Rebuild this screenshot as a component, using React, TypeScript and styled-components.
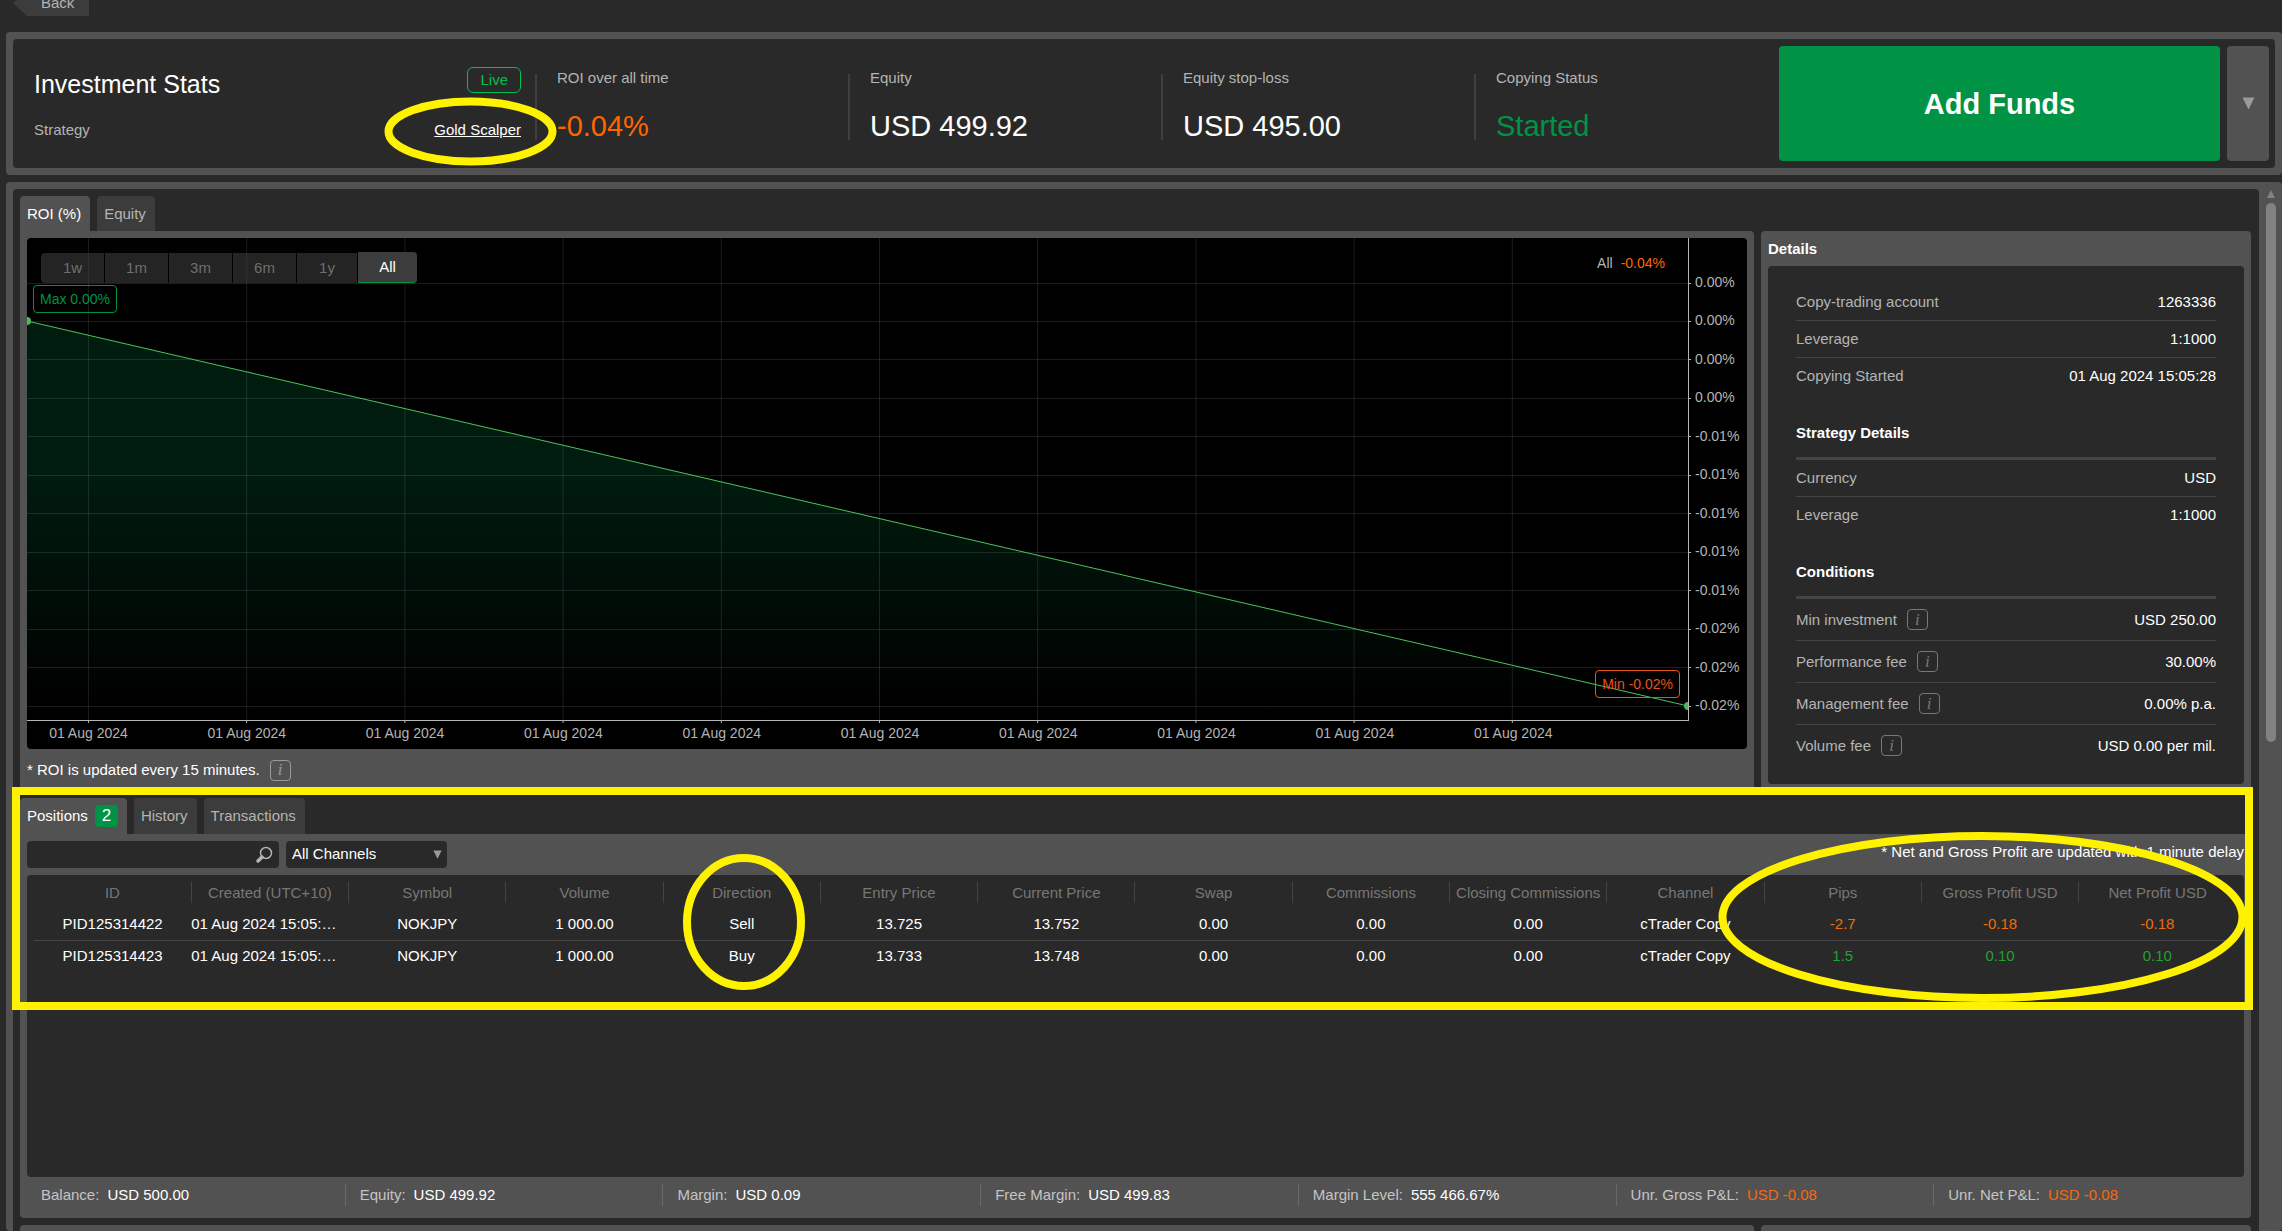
import React from "react";
import styled, { createGlobalStyle, css } from "styled-components";

const dark = "#292929";
const grey = "#525252";
const green = "#009345";
const orange = "#ff6600";

const Global = createGlobalStyle`
  *, *::before, *::after { box-sizing: border-box; }
  html, body { margin: 0; background: ${dark}; height: 100%; overflow: hidden; }
  #root { height: 100%; }
  body, button, input, select, table {
    font-family: "Liberation Sans", Arial, sans-serif;
    font-size: 15px;
    line-height: 18px;
  }
  button, input, select { border: 0; padding: 0; margin: 0; }
  h1, h2, h3, p, dl, dd { margin: 0; }
`;

const Page = styled.div`
  position: relative;
  height: 100%;
  overflow: hidden;
  display: flex;
  flex-direction: column;
  padding-left: 6px;
  color: #fff;
  background: ${dark};
`;

const TopBar = styled.div`
  height: 32px;
  flex: none;
  padding-left: 7px;
  display: flex;
  align-items: flex-start;
`;

const BackButton = styled.button`
  height: 16px;
  width: 76px;
  padding: 0 14px 4px 28px;
  display: flex;
  align-items: flex-end;
  line-height: 18px;
  color: #b4b4b4;
  background: #3c3c3c;
  clip-path: polygon(14px 100%, 0 3px, 3px 0, 100% 0, 100% 100%);
`;

const Frame = styled.section`
  background: ${grey};
  border-radius: 4px;
  padding: 7px;
`;

const Header = styled.div`
  background: ${dark};
  border-radius: 4px;
  height: 129px;
  padding: 7px 6px 7px 7px;
  display: flex;
  gap: 7px;
`;

const Summary = styled.div`
  flex: 1;
  display: grid;
  grid-template-columns: 515fr 313fr 313fr 313fr 305fr 441fr;
`;

const Intro = styled.div`
  padding: 20px 14px 0;
  display: flex;
  flex-direction: column;
  gap: 27px;
`;

const IntroLine = styled.div`
  display: flex;
  justify-content: space-between;
  align-items: center;
  color: #b4b4b4;
  height: 28px;

  & + & { height: 18px; }
`;

const Title = styled.h1`
  font-size: 25px;
  line-height: 36px;
  font-weight: 400;
  color: #fff;
  padding-top: 8px;
`;

const LiveBadge = styled.span`
  border: 1px solid #00c04f;
  color: #00c04f;
  border-radius: 6px;
  padding: 3px 12px;
  line-height: 18px;
`;

const StrategyLink = styled.a`
  color: #fff;
`;

const Stat = styled.div`
  margin: 28px 0 21px;
  padding-left: 20px;
  border-left: 2px solid #3f3f3f;
`;

const StatLabel = styled.div`
  color: #b4b4b4;
  line-height: 18px;
  margin-top: -5px;
`;

const StatValue = styled.div<{ $color?: string }>`
  font-size: 29px;
  line-height: 28px;
  margin-top: 25px;
  color: ${(p) => p.$color || "#fff"};
`;

const AddFunds = styled.button`
  background: ${green};
  color: #fff;
  border-radius: 4px;
  font-size: 29px;
  line-height: 34px;
  font-weight: 700;
`;

const MoreButton = styled.button`
  width: 42px;
  border-radius: 4px;
  background: ${grey};
  display: flex;
  align-items: center;
  justify-content: center;
`;

const Workspace = styled(Frame)`
  flex: 1;
  min-height: 0;
  margin-top: 7px;
  padding: 7px 6px 0 7px;
  display: flex;
  gap: 7px;
`;

const Scroller = styled.div`
  flex: 1;
  min-width: 0;
  background: ${dark};
  border-radius: 4px 4px 0 0;
  padding: 7px 8px 0 7px;
  overflow: hidden;
`;

const ScrollBar = styled.div`
  width: 10px;
  display: flex;
  flex-direction: column;
  align-items: center;
  gap: 5px;
`;

const ScrollThumb = styled.div`
  width: 10px;
  height: 539px;
  border-radius: 5px;
  background: #828282;
`;

const Tabs = styled.div`
  display: flex;
  gap: 7px;
`;

const Tab = styled.button<{ $active?: boolean; $tall?: boolean }>`
  height: ${(p) => (p.$tall ? 36 : 35)}px;
  padding: 0 9px 0 7px;
  border-radius: 4px 4px 0 0;
  display: flex;
  align-items: center;
  gap: 7px;
  background: ${(p) => (p.$active ? grey : "#3c3c3c")};
  color: ${(p) => (p.$active ? "#fff" : "#b4b4b4")};
`;

const Count = styled.span`
  background: ${green};
  border-radius: 4px;
  width: 23px;
  font-size: 17px;
  line-height: 22px;
  text-align: center;
`;

const Columns = styled.div`
  display: grid;
  grid-template-columns: minmax(0, 1734fr) minmax(0, 490fr);
  gap: 7px;
`;

const Card = styled.div<{ $squareCorner?: boolean }>`
  background: ${grey};
  border-radius: ${(p) => (p.$squareCorner ? "0 4px 4px 4px" : "4px")};
  padding: 7px;
`;

const ChartBox = styled.div`
  position: relative;
  background: #000;
  border-radius: 4px;
  height: 511px;
  overflow: hidden;
`;

const PlotRow = styled.div`
  display: flex;
  height: 483px;
`;

const Plot = styled.svg`
  flex: 1;
  min-width: 0;
  height: 483px;
  overflow: visible;
  border-right: 1px solid #b4b4b4;
  border-bottom: 1px solid #b4b4b4;
`;

const YAxis = styled.div`
  width: 58px;
  padding: 36px 0 8px 6px;
  display: flex;
  flex-direction: column;
  justify-content: space-between;
  font-size: 14px;
  line-height: 16px;
  color: #b4b4b4;
`;

const XAxis = styled.svg`
  display: block;
  width: calc(100% - 58px);
  height: 28px;
  font-size: 14px;
  fill: #b4b4b4;
`;

const Ranges = styled.div`
  position: absolute;
  left: 14px;
  top: 14px;
  display: flex;
  align-items: flex-end;
  gap: 1px;
`;

const RangeButton = styled.button<{ $active?: boolean }>`
  height: 30px;
  width: 63px;
  background: rgba(60, 60, 60, 0.6);
  color: #6f6f6f;

  &:first-child { border-radius: 4px 0 0 4px; }
  &:nth-child(5) { width: 60px; }

  ${(p) =>
    p.$active &&
    css`
      width: 59px;
      height: 31px;
      background: #3c3c3c;
      color: #fff;
      border-bottom: 1px solid ${green};
      border-radius: 0 4px 4px 0;
    `}
`;

const ChartBadge = styled.div<{ $low?: boolean }>`
  position: absolute;
  font-size: 14px;
  line-height: 16px;
  padding: 5px 6px;
  border-radius: 4px;
  border: 1px solid;
  ${(p) =>
    p.$low
      ? css`
          right: 67px;
          top: 432px;
          color: #e8541e;
        `
      : css`
          left: 6px;
          top: 47px;
          color: ${green};
        `}
`;

const RangeResult = styled.div`
  position: absolute;
  right: 82px;
  top: 17px;
  font-size: 14px;
  line-height: 16px;
  color: #b4b4b4;
  display: flex;
  gap: 8px;

  strong { font-weight: 400; color: ${orange}; }
`;

const Note = styled.div`
  display: flex;
  align-items: center;
  gap: 10px;
  height: 35px;
  padding-top: 7px;
`;

const InfoBox = styled.button<{ $light?: boolean }>`
  width: 21px;
  height: 21px;
  border: 1px solid ${(p) => (p.$light ? "#9a9a9a" : "#777")};
  border-radius: 4px;
  background: transparent;
  color: ${(p) => (p.$light ? "#9a9a9a" : "#777")};
  font: italic 17px/18px "Liberation Serif", "Times New Roman", serif;
`;

const DetailsTitle = styled.h2`
  font-size: 15px;
  line-height: 18px;
  padding: 2px 0 8px;
`;

const DetailsBox = styled.div`
  background: ${dark};
  border-radius: 4px;
  height: 518px;
  padding: 18px 28px 0;
`;

const GroupTitle = styled.h3`
  font-size: 15px;
  line-height: 18px;
  margin-top: 30px;
  padding-bottom: 15px;
  border-bottom: 3px solid #444;
`;

const Pair = styled.div<{ $tall?: boolean }>`
  display: flex;
  justify-content: space-between;
  align-items: center;
  height: ${(p) => (p.$tall ? 41 : 36)}px;

  &:not(:first-child) {
    height: ${(p) => (p.$tall ? 42 : 37)}px;
    border-top: 1px solid #444;
  }
`;

const Term = styled.dt`
  display: flex;
  align-items: center;
  gap: 10px;
  color: #b4b4b4;
`;

const Positions = styled.div`
  margin-top: 7px;
`;

const Toolbar = styled.div`
  display: flex;
  gap: 7px;
  margin-bottom: 7px;
`;

const SearchBox = styled.label`
  width: 252px;
  height: 27px;
  border-radius: 4px;
  background: ${dark};
  display: flex;
  align-items: center;
  padding: 0 6px;
`;

const SearchInput = styled.input`
  flex: 1;
  min-width: 0;
  background: transparent;
  color: #fff;
`;

const SelectWrap = styled.div`
  width: 161px;
  height: 27px;
  border-radius: 4px;
  background: ${dark};
  display: flex;
  align-items: center;
  padding: 0 5px 1px 6px;
`;

const Select = styled.select`
  appearance: none;
  flex: 1;
  background: transparent;
  color: #fff;
`;

const DelayNote = styled.p`
  margin-left: auto;
  line-height: 22px;
`;

const TableBox = styled.div`
  height: 302px;
  border-radius: 4px;
  background: ${dark};
  padding: 7px 8px 0 7px;
`;

const Table = styled.table`
  width: 100%;
  table-layout: fixed;
  border-collapse: collapse;
`;

const HeadCell = styled.th`
  height: 21px;
  padding: 0;
  font-weight: 400;
  color: #777;
  white-space: nowrap;

  & + & { border-left: 1px solid #444; }
`;

const BodyRow = styled.tr`
  & + & { border-top: 1px solid #444; }
`;

const Cell = styled.td<{ $color?: string; $start?: boolean }>`
  height: 32px;
  padding: 0;
  text-align: ${(p) => (p.$start ? "left" : "center")};
  white-space: nowrap;
  color: ${(p) => p.$color || "#fff"};
`;

const Spacer = styled.tr`
  height: 5px;
  td { padding: 0; }
`;

const Totals = styled.div`
  display: grid;
  grid-template-columns: repeat(7, 1fr);
  margin-right: -7px;
  padding: 7px 0 5px;
`;

const Total = styled.div`
  height: 22px;
  padding-left: 14px;
  display: flex;
  align-items: center;
  gap: 8px;
  color: #c4c4c4;

  & + & { border-left: 1px solid #6a6a6a; }
`;

const TotalValue = styled.span<{ $loss?: boolean }>`
  color: ${(p) => (p.$loss ? "#f26a11" : "#fff")};
`;

const NextRow = styled(Columns)`
  margin-top: 7px;
`;

const Marks = styled.svg`
  position: absolute;
  left: 0;
  top: 0;
  pointer-events: none;
  fill: none;
  stroke: #fff200;
  stroke-width: 8;
`;

const Down = ({ size = 13 }: { size?: number }) => (
  <svg width={size} height={size} viewBox="0 0 12 12" aria-hidden="true">
    <path d="M0.5 0.5H11.5L6 11.5Z" fill="#9a9a9a" />
  </svg>
);

const stats = [
  { label: "ROI over all time", value: "-0.04%", color: orange },
  { label: "Equity", value: "USD 499.92" },
  { label: "Equity stop-loss", value: "USD 495.00" },
  { label: "Copying Status", value: "Started", color: green },
];

const yLabels = ["0.00%", "0.00%", "0.00%", "0.00%", "-0.01%", "-0.01%", "-0.01%", "-0.01%", "-0.01%", "-0.02%", "-0.02%", "-0.02%"];
const yLines = yLabels.map((_, i) => Math.floor(45 + (i * 423) / 11) + 0.5);
const xShares = Array.from({ length: 10 }, (_, i) => `${((61.5 + i * 158.3) / 1662) * 100}%`);

const groups = [
  {
    rows: [
      ["Copy-trading account", "1263336"],
      ["Leverage", "1:1000"],
      ["Copying Started", "01 Aug 2024 15:05:28"],
    ],
  },
  { title: "Strategy Details", rows: [["Currency", "USD"], ["Leverage", "1:1000"]] },
  {
    title: "Conditions",
    info: true,
    rows: [
      ["Min investment", "USD 250.00"],
      ["Performance fee", "30.00%"],
      ["Management fee", "0.00% p.a."],
      ["Volume fee", "USD 0.00 per mil."],
    ],
  },
];

const heads = ["ID", "Created (UTC+10)", "Symbol", "Volume", "Direction", "Entry Price", "Current Price", "Swap", "Commissions", "Closing Commissions", "Channel", "Pips", "Gross Profit USD", "Net Profit USD"];
const positions = [
  ["PID125314422", "01 Aug 2024 15:05:…", "NOKJPY", "1 000.00", "Sell", "13.725", "13.752", "0.00", "0.00", "0.00", "cTrader Copy", "-2.7", "-0.18", "-0.18"],
  ["PID125314423", "01 Aug 2024 15:05:…", "NOKJPY", "1 000.00", "Buy", "13.733", "13.748", "0.00", "0.00", "0.00", "cTrader Copy", "1.5", "0.10", "0.10"],
];
const totals = [
  ["Balance:", "USD 500.00"],
  ["Equity:", "USD 499.92"],
  ["Margin:", "USD 0.09"],
  ["Free Margin:", "USD 499.83"],
  ["Margin Level:", "555 466.67%"],
  ["Unr. Gross P&L:", "USD -0.08"],
  ["Unr. Net P&L:", "USD -0.08"],
];

const profitColor = (value: string, column: number) =>
  column < 11 ? undefined : value.startsWith("-") ? "#f26a11" : "#22a132";

function Chart() {
  return (
    <ChartBox>
      <PlotRow>
        <Plot>
          <defs>
            <linearGradient id="area" x1="0" y1="0" x2="0" y2="1">
              <stop offset="0" stopColor="#001c0e" />
              <stop offset="0.4" stopColor="#001c0e" />
              <stop offset="1" stopColor="#000" />
            </linearGradient>
          </defs>
          <svg width="100%" height="482" viewBox="0 0 1662 482" preserveAspectRatio="none">
            <path d="M0 83L1662 468H0Z" fill="url(#area)" />
          </svg>
          {xShares.map((x) => (
            <React.Fragment key={x}>
              <line x1={x} x2={x} y1="0" y2="482" stroke="#dfe4ff" strokeOpacity="0.12" />
              <line x1={x} x2={x} y1="483" y2="485" stroke="#b4b4b4" />
            </React.Fragment>
          ))}
          {yLines.map((y) => (
            <React.Fragment key={y}>
              <line x1="0" x2="100%" y1={y} y2={y} stroke="#dfe4ff" strokeOpacity="0.12" />
              <rect x="100%" y={y - 0.5} width="3" height="1" fill="#b4b4b4" />
            </React.Fragment>
          ))}
          <svg width="100%" height="482">
            <line x1="0" y1="83" x2="100%" y2="468" stroke="#4cc35c" />
            <circle cx="0" cy="83" r="4" fill="#4cb85a" />
            <circle cx="100%" cy="468" r="4" fill="#4cb85a" />
          </svg>
        </Plot>
        <YAxis>
          {yLabels.map((label, i) => (
            <span key={i}>{label}</span>
          ))}
        </YAxis>
      </PlotRow>
      <XAxis>
        {xShares.map((x) => (
          <text key={x} x={x} y="17" textAnchor="middle">01 Aug 2024</text>
        ))}
      </XAxis>
      <Ranges>
        {["1w", "1m", "3m", "6m", "1y", "All"].map((r) => (
          <RangeButton key={r} $active={r === "All"}>{r}</RangeButton>
        ))}
      </Ranges>
      <ChartBadge>Max 0.00%</ChartBadge>
      <ChartBadge $low>Min -0.02%</ChartBadge>
      <RangeResult>
        All <strong>-0.04%</strong>
      </RangeResult>
    </ChartBox>
  );
}

export default function App() {
  return (
    <Page>
      <Global />
      <TopBar>
        <BackButton>Back</BackButton>
      </TopBar>
      <Frame>
        <Header>
          <Summary>
            <Intro>
              <IntroLine>
                <Title>Investment Stats</Title>
                <LiveBadge>Live</LiveBadge>
              </IntroLine>
              <IntroLine>
                <span>Strategy</span>
                <StrategyLink href="#strategy">Gold Scalper</StrategyLink>
              </IntroLine>
            </Intro>
            {stats.map((s) => (
              <Stat key={s.label}>
                <StatLabel>{s.label}</StatLabel>
                <StatValue $color={s.color}>{s.value}</StatValue>
              </Stat>
            ))}
            <AddFunds>Add Funds</AddFunds>
          </Summary>
          <MoreButton aria-label="More actions">
            <Down />
          </MoreButton>
        </Header>
      </Frame>
      <Workspace>
        <Scroller>
          <Tabs>
            <Tab $active>ROI (%)</Tab>
            <Tab>Equity</Tab>
          </Tabs>
          <Columns>
            <Card $squareCorner>
              <Chart />
              <Note>
                * ROI is updated every 15 minutes.
                <InfoBox $light aria-label="About ROI">i</InfoBox>
              </Note>
            </Card>
            <Card>
              <DetailsTitle>Details</DetailsTitle>
              <DetailsBox>
                {groups.map((g, n) => (
                  <React.Fragment key={n}>
                    {g.title && <GroupTitle>{g.title}</GroupTitle>}
                    <dl>
                      {g.rows.map(([term, value]) => (
                        <Pair key={term} $tall={g.info}>
                          <Term>
                            {term}
                            {g.info && <InfoBox aria-label={`About ${term}`}>i</InfoBox>}
                          </Term>
                          <dd>{value}</dd>
                        </Pair>
                      ))}
                    </dl>
                  </React.Fragment>
                ))}
              </DetailsBox>
            </Card>
          </Columns>
          <Positions>
            <Tabs>
              <Tab $active $tall>
                Positions <Count>2</Count>
              </Tab>
              <Tab $tall>History</Tab>
              <Tab $tall>Transactions</Tab>
            </Tabs>
            <Card $squareCorner>
              <Toolbar>
                <SearchBox>
                  <SearchInput type="text" aria-label="Search positions" />
                  <svg width="18" height="18" viewBox="0 0 18 18" aria-hidden="true">
                    <circle cx="11" cy="7" r="5.5" fill="none" stroke="#b4b4b4" strokeWidth="1.5" />
                    <path d="M7 11L3 15" stroke="#b4b4b4" strokeWidth="3.5" strokeLinecap="round" />
                  </svg>
                </SearchBox>
                <SelectWrap>
                  <Select aria-label="Channel">
                    <option>All Channels</option>
                  </Select>
                  <Down size={9} />
                </SelectWrap>
                <DelayNote>* Net and Gross Profit are updated with 1 minute delay</DelayNote>
              </Toolbar>
              <TableBox>
                <Table>
                  <thead>
                    <tr>
                      {heads.map((h) => (
                        <HeadCell key={h}>{h}</HeadCell>
                      ))}
                    </tr>
                  </thead>
                  <tbody>
                    <Spacer>
                      <td colSpan={14} />
                    </Spacer>
                  </tbody>
                  <tbody>
                    {positions.map((row) => (
                      <BodyRow key={row[0]}>
                        {row.map((value, i) => (
                          <Cell key={i} $start={i === 1} $color={profitColor(value, i)}>
                            {value}
                          </Cell>
                        ))}
                      </BodyRow>
                    ))}
                  </tbody>
                </Table>
              </TableBox>
              <Totals>
                {totals.map(([label, value]) => (
                  <Total key={label}>
                    {label}
                    <TotalValue $loss={value.includes("-")}>{value}</TotalValue>
                  </Total>
                ))}
              </Totals>
            </Card>
          </Positions>
          <NextRow>
            <Card />
            <Card />
          </NextRow>
        </Scroller>
        <ScrollBar>
          <svg width="10" height="9" viewBox="0 0 10 9" aria-hidden="true">
            <path d="M5 1L9 9H1Z" fill="#828282" />
          </svg>
          <ScrollThumb />
        </ScrollBar>
      </Workspace>
      <Marks width="2282" height="1231" aria-hidden="true">
        <ellipse cx="470.5" cy="131.5" rx="82" ry="30" />
        <rect x="16" y="791" width="2233" height="215" />
        <ellipse cx="744" cy="922" rx="57" ry="64" />
        <ellipse cx="1982.5" cy="917" rx="260" ry="81" />
      </Marks>
    </Page>
  );
}
